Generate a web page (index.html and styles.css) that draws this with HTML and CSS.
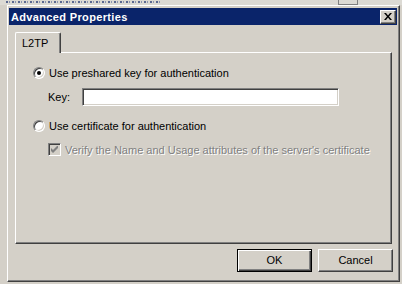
FILE: index.html
```html
<!DOCTYPE html>
<html>
<head>
<meta charset="UTF-8">
<title>Advanced Properties</title>
<link rel="stylesheet" href="styles.css">
</head>
<body>
<div class="behind">
  <span class="behind-text"></span>
  <span class="behind-x"></span>
</div>

<div class="dialog">
  <div class="titlebar">
    <span class="title">Advanced Properties</span>
    <span class="close">
      <svg width="8" height="7" viewBox="0 0 8 7"><path d="M0 0h2l2 2.5 2-2.5h2l-3 3.5 3 3.5h-2l-2-2.5-2 2.5h-2l3-3.5z" fill="#000"/></svg>
    </span>
  </div>

  <div class="tabs">
    <div class="tab">L2TP</div>
  </div>

  <div class="panel">
    <div class="row first">
      <span class="radio checked"></span>
      <span class="label">Use preshared key for authentication</span>
    </div>
    <div class="row keyrow">
      <span class="keylabel">Key:</span>
      <span class="textbox"></span>
    </div>
    <div class="row second">
      <span class="radio"></span>
      <span class="label">Use certificate for authentication</span>
    </div>
    <div class="row checkrow">
      <span class="check">
        <svg width="7" height="7" viewBox="0 0 7 7"><path d="M0 2v3l2 2 5-5v-3l-5 5z" fill="#808080"/></svg>
      </span>
      <span class="label disabled">Verify the Name and Usage attributes of the server's certificate</span>
    </div>
  </div>

  <div class="buttons">
    <span class="btn default">OK</span>
    <span class="btn">Cancel</span>
  </div>
</div>
</body>
</html>
```

FILE: styles.css
```css
body {
  margin: 0;
  width: 402px;
  height: 284px;
  overflow: hidden;
  background-color: #d4d0c8;
  font-family: "Liberation Sans", Arial, sans-serif;
  font-size: 11px;
  color: #000;
}
/* the window behind the dialog, only a sliver shows */
.behind {
  height: 5px;
  overflow: hidden;
  display: flex;
  padding-left: 6px;
  background: #dcdad4;
}
.behind-text {
  margin-top: 1px;
  width: 156px;
  height: 2px;
  background: repeating-linear-gradient(90deg, #5a6890 0 2px, transparent 2px 3px, #8a94b0 3px 4px, transparent 4px 6px);
}
.behind-x {
  margin-left: 176px;
  width: 18px;
  height: 4px;
  border: 1px solid #808080;
  border-top: none;
}
.dialog {
  box-sizing: border-box;
  margin-left: 7px;
  width: 393px;
  height: 277px;
  padding: 2px 2px 2px 1px;
  border: 1px solid;
  border-color: #fff #404040 #404040 #fff;
  box-shadow: inset -1px -1px #808080, inset 1px 1px #d4d0c8;
  background: #d4d0c8;
}
.titlebar {
  height: 17px;
  background: #0a246a;
  display: flex;
  align-items: center;
  justify-content: space-between;
  padding-left: 2px;
}
.title {
  color: #fff;
  font-weight: bold;
  letter-spacing: 0.35px;
}
.close {
  box-sizing: border-box;
  width: 16px;
  height: 14px;
  margin-right: 1px;
  background: #d4d0c8;
  border: 1px solid;
  border-color: #fff #404040 #404040 #fff;
  box-shadow: inset -1px -1px #808080;
  display: flex;
  align-items: center;
  justify-content: center;
  padding: 0 1px 1px 0;
}
.tabs {
  display: flex;
  margin-top: 7px;
  height: 20px;
  padding-left: 6px;
}
.tab {
  position: relative;
  z-index: 1;
  box-sizing: border-box;
  width: 46px;
  height: 21px;
  padding: 4px 0 0 6px;
  border: 1px solid;
  border-color: #fff #404040 transparent #fff;
  border-bottom: none;
  border-radius: 2px 2px 0 0;
  box-shadow: inset -1px 0 #808080;
  background: #d4d0c8;
}
.panel {
  box-sizing: border-box;
  margin-left: 6px;
  width: 377px;
  height: 192px;
  border: 1px solid;
  border-color: #fff #404040 #404040 #fff;
  box-shadow: inset -1px -1px #808080;
  padding-left: 17px;
}
.row {
  display: flex;
  align-items: center;
}
.row.first {
  margin-top: 14px;
  height: 12px;
}
.row.keyrow {
  margin-top: 9px;
  height: 18px;
  padding-left: 15px;
}
.row.second {
  margin-top: 14px;
  height: 12px;
}
.row.checkrow {
  margin-top: 11px;
  height: 13px;
  padding-left: 15px;
}
.radio {
  box-sizing: border-box;
  width: 12px;
  height: 12px;
  border-radius: 50%;
  background: #fff;
  border: 1px solid;
  border-color: #808080 #fff #fff #808080;
  box-shadow: inset 1px 1px #404040, inset -1px -1px #d4d0c8;
  display: flex;
  align-items: center;
  justify-content: center;
}
.radio.checked::after {
  content: "";
  width: 4px;
  height: 4px;
  border-radius: 50%;
  background: #000;
}
.label {
  margin-left: 4px;
  white-space: nowrap;
}
.label.disabled {
  color: #808080;
  text-shadow: 1px 1px #fff;
}
.keylabel {
  width: 34px;
}
.textbox {
  box-sizing: border-box;
  width: 257px;
  height: 18px;
  background: #fff;
  border: 1px solid;
  border-color: #808080 #fff #fff #808080;
  box-shadow: inset 1px 1px #404040, inset -1px -1px #d4d0c8;
}
.check {
  box-sizing: border-box;
  width: 13px;
  height: 13px;
  background: #d4d0c8;
  border: 1px solid;
  border-color: #808080 #fff #fff #808080;
  box-shadow: inset 1px 1px #404040, inset -1px -1px #d4d0c8;
  display: flex;
  align-items: center;
  justify-content: center;
}
.buttons {
  display: flex;
  justify-content: flex-end;
  gap: 6px;
  margin-top: 5px;
  padding-right: 4px;
}
.btn {
  box-sizing: border-box;
  width: 75px;
  height: 23px;
  display: flex;
  align-items: center;
  justify-content: center;
  border: 1px solid;
  border-color: #fff #404040 #404040 #fff;
  box-shadow: inset -1px -1px #808080;
  padding-bottom: 1px;
}
.btn.default {
  border: 1px solid #000;
  box-shadow: inset 1px 1px #fff, inset -1px -1px #404040, inset -2px -2px #808080;
}
```
